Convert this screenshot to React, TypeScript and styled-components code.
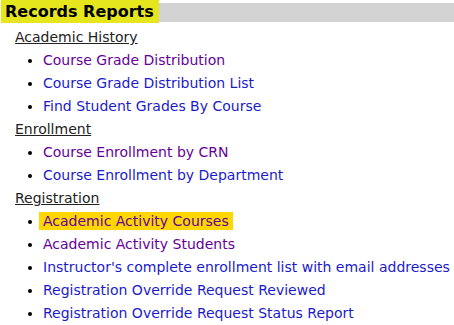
import React from 'react';
import styled, { createGlobalStyle } from 'styled-components';

const GlobalStyle = createGlobalStyle`
  body {
    margin: 0;
    background: #ffffff;
    font-family: Verdana, "DejaVu Sans", sans-serif;
  }
`;

const Header = styled.div`
  display: flex;
  align-items: flex-start;
`;

const Title = styled.h1`
  margin: 0 0 0 1px;
  padding: 0 5px 0 4px;
  height: 23px;
  line-height: 23px;
  font-size: 16px;
  font-weight: 700;
  color: #000000;
  background: #e6e61e;
  white-space: nowrap;
`;

const HeaderFill = styled.div`
  flex: 1;
  height: 19px;
  margin-top: 3px;
  background: #d3d3d3;
`;

const Content = styled.div`
  padding: 3px 0 0 15px;
`;

const SectionTitle = styled.div`
  font-size: 14px;
  line-height: 23px;
  color: #222222;
  text-decoration: underline;
`;

const LinkList = styled.ul`
  margin: 0;
  padding-left: 28px;
  list-style: disc;
`;

const Item = styled.li`
  font-size: 14px;
  line-height: 23px;
`;

const Link = styled.a<{ $visited?: boolean; $active?: boolean }>`
  color: ${p => (p.$visited ? '#660099' : '#1b1bcc')};
  text-decoration: none;
  background: ${p => (p.$active ? '#ffd700' : 'transparent')};
  padding: ${p => (p.$active ? '1px 4px 1px 4px' : '0')};
  margin-left: ${p => (p.$active ? '-4px' : '0')};
`;

interface Report {
  label: string;
  visited?: boolean;
  active?: boolean;
}

const sections: { title: string; reports: Report[] }[] = [
  {
    title: 'Academic History',
    reports: [
      { label: 'Course Grade Distribution', visited: true },
      { label: 'Course Grade Distribution List' },
      { label: 'Find Student Grades By Course' },
    ],
  },
  {
    title: 'Enrollment',
    reports: [
      { label: 'Course Enrollment by CRN', visited: true },
      { label: 'Course Enrollment by Department' },
    ],
  },
  {
    title: 'Registration',
    reports: [
      { label: 'Academic Activity Courses', visited: true, active: true },
      { label: 'Academic Activity Students', visited: true },
      { label: "Instructor's complete enrollment list with email addresses" },
      { label: 'Registration Override Request Reviewed' },
      { label: 'Registration Override Request Status Report' },
    ],
  },
];

export default function App() {
  return (
    <>
      <GlobalStyle />
      <Header>
        <Title>Records Reports</Title>
        <HeaderFill />
      </Header>
      <Content>
        {sections.map(section => (
          <div key={section.title}>
            <SectionTitle>{section.title}</SectionTitle>
            <LinkList>
              {section.reports.map(r => (
                <Item key={r.label}>
                  <Link href="#" $visited={r.visited} $active={r.active}>
                    {r.label}
                  </Link>
                </Item>
              ))}
            </LinkList>
          </div>
        ))}
      </Content>
    </>
  );
}
